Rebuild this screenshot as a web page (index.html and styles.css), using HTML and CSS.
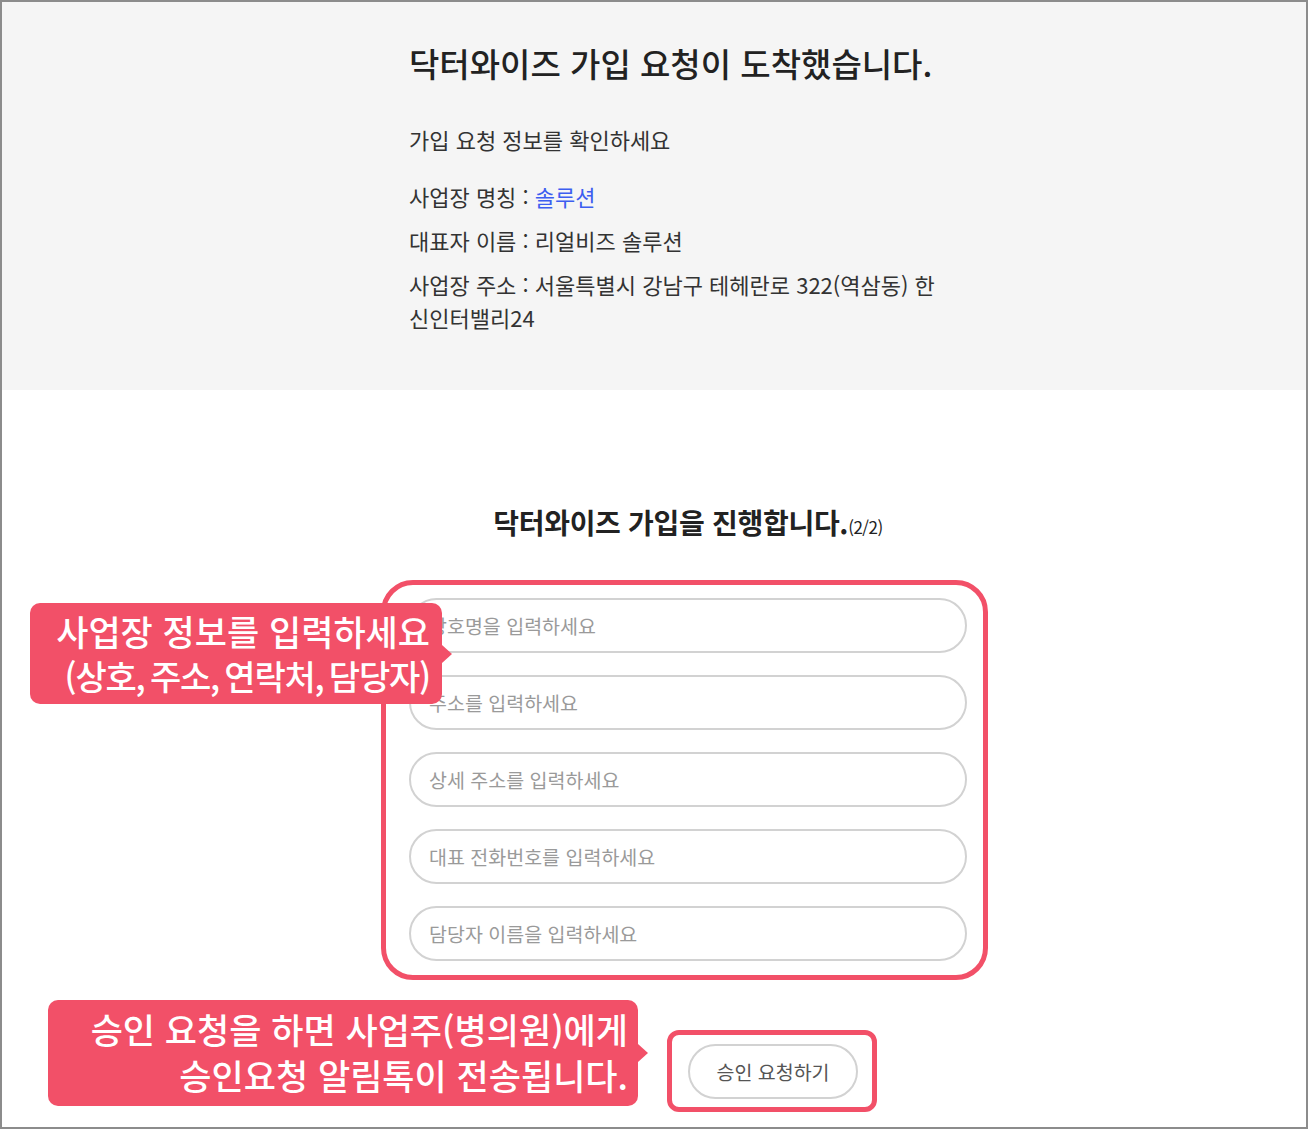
FILE: index.html
```html
<!DOCTYPE html>
<html lang="ko">

<head>
    <meta charset="UTF-8">
    <meta name="viewport" content="width=device-width, initial-scale=1.0">
    <title>닥터와이즈 가입 요청</title>
    <link rel="stylesheet" href="styles.css">
</head>

<body>
    <div class="frame">
        <section class="notice">
            <div class="column">
                <h1>닥터와이즈 가입 요청이 도착했습니다.</h1>
                <p class="lead">가입 요청 정보를 확인하세요</p>
                <p class="info">사업장 명칭 : <span class="highlight">솔루션</span></p>
                <p class="info">대표자 이름 : 리얼비즈 솔루션</p>
                <p class="info">사업장 주소 : 서울특별시 강남구 테헤란로 322(역삼동) 한신인터밸리24</p>
            </div>
        </section>

        <section class="join">
            <div class="column">
                <h2>닥터와이즈 가입을 진행합니다.<small>(2/2)</small></h2>

                <div class="form-fields">
                    <input type="text" placeholder="상호명을 입력하세요">
                    <input type="text" placeholder="주소를 입력하세요">
                    <input type="text" placeholder="상세 주소를 입력하세요">
                    <input type="text" placeholder="대표 전화번호를 입력하세요">
                    <input type="text" placeholder="담당자 이름을 입력하세요">

                    <div class="mark mark-fields"></div>
                    <div class="callout callout-fields">
                        사업장 정보를 입력하세요<br>
                        <span class="tight">(상호, 주소, 연락처, 담당자)</span>
                    </div>
                </div>

                <div class="actions">
                    <button type="button" class="submit-btn">승인 요청하기</button>
                    <div class="mark mark-button"></div>
                    <div class="callout callout-button">
                        승인 요청을 하면 사업주(병의원)에게<br>
                        승인요청 알림톡이 전송됩니다.
                    </div>
                </div>
            </div>
        </section>
    </div>
</body>

</html>
```

FILE: styles.css
```css
body {
    margin: 0;
    font-family: "Noto Sans CJK KR", "Noto Sans", sans-serif;
    color: #222;
    background: #fff;
}

.frame {
    width: 1308px;
    height: 1129px;
    box-sizing: border-box;
    border: 2px solid #8c8c8c;
    overflow: hidden;
}

.column {
    width: 558px;
    margin-left: 407px;
}

/* top: request summary */
.notice {
    background-color: #f5f5f5;
    height: 388px;
    padding-top: 37px;
    box-sizing: border-box;
}

.notice .column {
    width: 540px;
}

.notice h1 {
    margin: 0 0 36px;
    font-size: 33px;
    font-weight: 500;
    line-height: 48px;
    white-space: nowrap;
    color: #222;
}

.notice p {
    margin: 0;
    font-size: 22px;
    line-height: 33px;
    color: #333;
}

.notice .lead {
    margin-bottom: 24px;
}

.notice .info {
    margin-bottom: 11px;
}

.highlight {
    color: #3d5ef0;
}

/* bottom: join form */
.join {
    padding-top: 112px;
}

.join h2 {
    margin: 0 0 51px;
    text-align: center;
    font-size: 28px;
    font-weight: 700;
    line-height: 40px;
    letter-spacing: -0.3px;
    color: #222;
}

.join h2 small {
    font-size: 17px;
    font-weight: 400;
    letter-spacing: -0.5px;
}

.form-fields {
    position: relative;
    display: flex;
    flex-direction: column;
    gap: 22px;
}

.form-fields input {
    height: 55px;
    box-sizing: border-box;
    border: 2px solid #d2d2d2;
    border-radius: 28px;
    padding: 0 18px;
    font-family: inherit;
    font-size: 19.5px;
    color: #333;
    background: #fff;
    outline: none;
}

.form-fields input::placeholder {
    color: #9a9a9a;
}

.actions {
    position: relative;
    padding-top: 83px;
    padding-left: 279px;
}

.submit-btn {
    width: 170px;
    height: 55px;
    border: 2px solid #d2d2d2;
    border-radius: 28px;
    background: #fff;
    font-family: inherit;
    font-size: 19.5px;
    color: #555;
    cursor: pointer;
}

/* annotation overlays */
.mark {
    position: absolute;
    border: 5px solid #f25068;
    box-sizing: border-box;
    pointer-events: none;
}

.mark-fields {
    left: -28px;
    top: -18px;
    width: 607px;
    height: 400px;
    border-radius: 32px;
}

.mark-button {
    left: 258px;
    top: 69px;
    width: 210px;
    height: 82px;
    border-radius: 12px;
}

.callout {
    position: absolute;
    background-color: #f25068;
    color: #fff;
    border-radius: 10px;
    text-align: right;
    font-weight: 500;
    white-space: nowrap;
}

.callout::after {
    content: "";
    position: absolute;
    right: -10px;
    top: 50%;
    margin-top: -9px;
    border-left: 10px solid #f25068;
    border-top: 9px solid transparent;
    border-bottom: 9px solid transparent;
}

.callout-fields {
    left: -379px;
    top: 5px;
    width: 412px;
    height: 101px;
    box-sizing: border-box;
    padding: 6px 12px 0 0;
    font-size: 35px;
    line-height: 44px;
}

.callout-fields .tight {
    font-size: 34px;
    letter-spacing: -1.2px;
    word-spacing: -3px;
}

.callout-button {
    left: -361px;
    top: 39px;
    width: 590px;
    height: 106px;
    box-sizing: border-box;
    padding: 6px 10px 0 0;
    font-size: 35px;
    line-height: 46px;
}
```
